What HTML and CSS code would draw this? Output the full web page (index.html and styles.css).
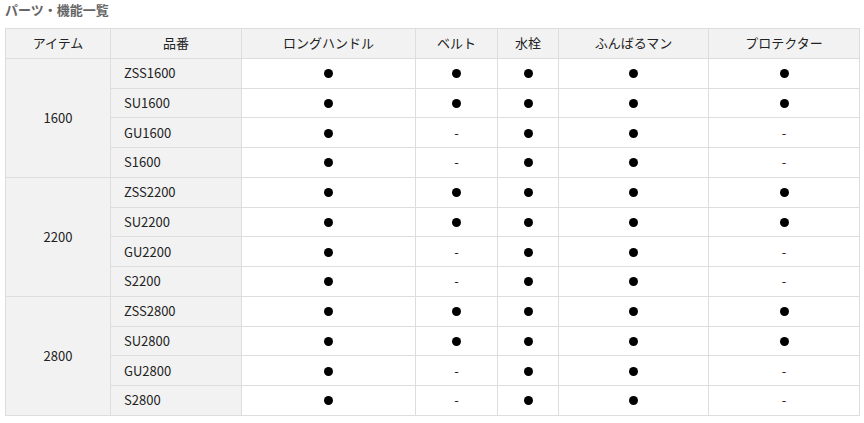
FILE: index.html
```html
<!DOCTYPE html>
<html lang="ja">
<head>
<meta charset="utf-8">
<link rel="stylesheet" href="styles.css">
</head>
<body>
<h2 class="title">パーツ・機能一覧</h2>
<table class="spec">
<colgroup>
<col class="c1"><col class="c2"><col class="c3"><col class="c4"><col class="c5"><col class="c6"><col class="c7">
</colgroup>
<thead>
<tr><th>アイテム</th><th>品番</th><th>ロングハンドル</th><th>ベルト</th><th>水栓</th><th>ふんばるマン</th><th>プロテクター</th></tr>
</thead>
<tbody>
<tr><th class="item" rowspan="4">1600</th><th class="model">ZSS1600</th><td><i class="dot"></i></td><td><i class="dot"></i></td><td><i class="dot"></i></td><td><i class="dot"></i></td><td><i class="dot"></i></td></tr>
<tr><th class="model">SU1600</th><td><i class="dot"></i></td><td><i class="dot"></i></td><td><i class="dot"></i></td><td><i class="dot"></i></td><td><i class="dot"></i></td></tr>
<tr><th class="model">GU1600</th><td><i class="dot"></i></td><td>-</td><td><i class="dot"></i></td><td><i class="dot"></i></td><td>-</td></tr>
<tr><th class="model">S1600</th><td><i class="dot"></i></td><td>-</td><td><i class="dot"></i></td><td><i class="dot"></i></td><td>-</td></tr>
<tr><th class="item" rowspan="4">2200</th><th class="model">ZSS2200</th><td><i class="dot"></i></td><td><i class="dot"></i></td><td><i class="dot"></i></td><td><i class="dot"></i></td><td><i class="dot"></i></td></tr>
<tr><th class="model">SU2200</th><td><i class="dot"></i></td><td><i class="dot"></i></td><td><i class="dot"></i></td><td><i class="dot"></i></td><td><i class="dot"></i></td></tr>
<tr><th class="model">GU2200</th><td><i class="dot"></i></td><td>-</td><td><i class="dot"></i></td><td><i class="dot"></i></td><td>-</td></tr>
<tr><th class="model">S2200</th><td><i class="dot"></i></td><td>-</td><td><i class="dot"></i></td><td><i class="dot"></i></td><td>-</td></tr>
<tr><th class="item" rowspan="4">2800</th><th class="model">ZSS2800</th><td><i class="dot"></i></td><td><i class="dot"></i></td><td><i class="dot"></i></td><td><i class="dot"></i></td><td><i class="dot"></i></td></tr>
<tr><th class="model">SU2800</th><td><i class="dot"></i></td><td><i class="dot"></i></td><td><i class="dot"></i></td><td><i class="dot"></i></td><td><i class="dot"></i></td></tr>
<tr><th class="model">GU2800</th><td><i class="dot"></i></td><td>-</td><td><i class="dot"></i></td><td><i class="dot"></i></td><td>-</td></tr>
<tr><th class="model">S2800</th><td><i class="dot"></i></td><td>-</td><td><i class="dot"></i></td><td><i class="dot"></i></td><td>-</td></tr>
</tbody>
</table>
</body>
</html>
```
FILE: styles.css
```css
html, body {
  margin: 0;
  padding: 0;
  background: #fff;
}
body {
  padding: 0 5px;
  font-family: "Noto Sans CJK JP", "Noto Sans", sans-serif;
  font-size: 13px;
  color: #222;
}
.title {
  margin: 0;
  padding-top: 0;
  height: 28px;
  line-height: 20px;
  font-size: 13px;
  font-weight: bold;
  color: #666;
}
.spec {
  border-collapse: collapse;
  table-layout: fixed;
  width: 854px;
}
.c1 { width: 105px; }
.c2 { width: 131px; }
.c3 { width: 174px; }
.c4 { width: 82px; }
.c5 { width: 61px; }
.c6 { width: 150px; }
.c7 { width: 151px; }
.spec th, .spec td {
  border: 1px solid #ddd;
  height: 28.75px;
  padding: 0;
  text-align: center;
  vertical-align: middle;
  font-weight: normal;
  line-height: 16px;
}
.spec thead th,
.spec .item,
.spec .model {
  background: #f2f2f2;
}
.spec .model {
  text-align: left;
  padding-left: 13px;
}
.dot {
  display: inline-block;
  width: 9px;
  height: 9px;
  border-radius: 50%;
  background: #000;
  vertical-align: middle;
  position: relative;
  top: -1px;
}
```
